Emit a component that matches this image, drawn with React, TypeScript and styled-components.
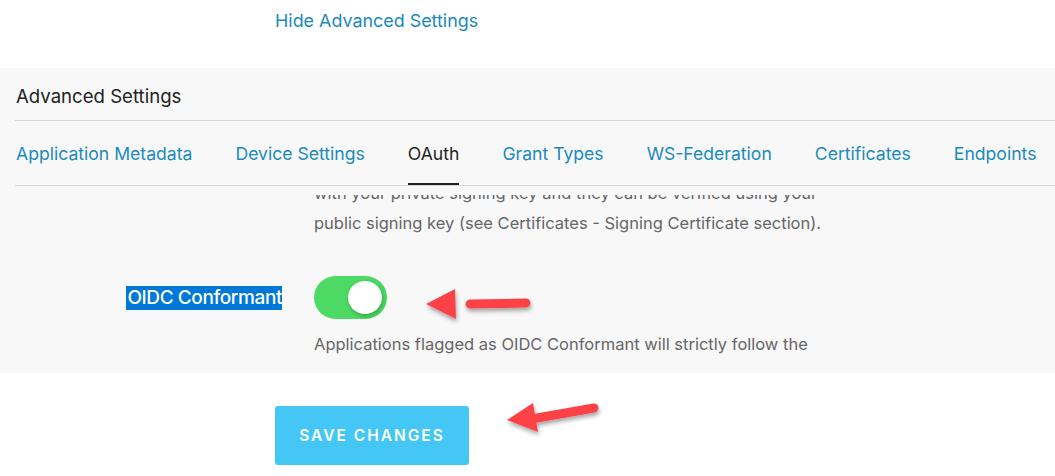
import React, { useLayoutEffect, useRef } from 'react';
import styled, { createGlobalStyle } from 'styled-components';

const GlobalStyle = createGlobalStyle`
  body {
    margin: 0;
    background: #fff;
    font-family: Inter, "Noto Sans", sans-serif;
  }
`;

const Page = styled.div`
  width: 1055px;
  height: 476px;
  overflow: hidden;
`;

const TopBar = styled.div`
  height: 68px;
  padding: 10px 0 0 275px;
  box-sizing: border-box;
`;

const Link = styled.a`
  color: #1a8abd;
  font-size: 17.9px;
  line-height: 22px;
  text-decoration: none;
`;

const Panel = styled.section`
  background: #f8f8f8;
  padding-left: 15px;
`;

const PanelTitle = styled.h3`
  margin: 0;
  padding: 18px 0 14px 1px;
  font-size: 18.6px;
  font-weight: 400;
  line-height: 20px;
  color: #222;
  border-bottom: 1px solid #d8d8d8;
`;

const Tabs = styled.nav`
  display: flex;
  gap: 43px;
  height: 64px;
  padding-left: 1px;
  border-bottom: 1px solid #d8d8d8;
  white-space: nowrap;
  overflow: hidden;
`;

const Tab = styled.a<{ $active?: boolean }>`
  display: flex;
  align-items: center;
  font-size: 17.6px;
  color: ${(p) => (p.$active ? '#222' : '#1a8abd')};
  border-bottom: 2px solid ${(p) => (p.$active ? '#222' : 'transparent')};
  padding-top: 2px;
  text-decoration: none;
`;

const Scroller = styled.div`
  margin-top: 9px;
  height: 178px;
  overflow: hidden;
`;

const ScrollBody = styled.div`
  padding-bottom: 60px;
`;

const Field = styled.div<{ $gap?: number }>`
  position: relative;
  display: grid;
  grid-template-columns: 267px 540px;
  column-gap: 32px;
  margin-top: ${(p) => p.$gap ?? 0}px;
`;

const Label = styled.div`
  display: flex;
  justify-content: flex-end;
  align-items: center;
  height: 43px;
`;

const Selected = styled.span`
  background: #0078d7;
  color: #fff;
  font-size: 19px;
  font-weight: 500;
  letter-spacing: -0.4px;
  line-height: 24px;
  padding: 0 0 0 1px;
`;

const Help = styled.p<{ $top?: number }>`
  grid-column: 2;
  margin: ${(p) => p.$top ?? 0}px 0 0;
  font-size: 16.5px;
  line-height: 30px;
  color: #666;
  white-space: nowrap;
`;

const Toggle = styled.div<{ $on?: boolean }>`
  width: 73px;
  height: 43px;
  border-radius: 22px;
  background: ${(p) => (p.$on ? '#4cd964' : '#ccc')};
  display: flex;
  align-items: center;
  justify-content: ${(p) => (p.$on ? 'flex-end' : 'flex-start')};
  padding: 0 5px;
  box-sizing: border-box;
`;

const Knob = styled.div`
  width: 34px;
  height: 33px;
  border-radius: 50%;
  background: #fff;
  box-shadow: 1px 2px 4px rgba(0, 0, 0, 0.25);
`;

const Arrow = styled.svg`
  position: absolute;
  overflow: visible;
`;

const Footer = styled.div`
  position: relative;
  padding: 33px 0 0 275px;
`;

const SaveButton = styled.button`
  width: 194px;
  height: 59px;
  border: none;
  border-radius: 3px;
  background: #44c7f4;
  color: #fff;
  font-family: inherit;
  font-size: 15.5px;
  font-weight: 600;
  letter-spacing: 2px;
  cursor: pointer;
`;

const tabs = [
  'Application Metadata',
  'Device Settings',
  'OAuth',
  'Grant Types',
  'WS-Federation',
  'Certificates',
  'Endpoints',
];

const RedArrow = ({ d, head, style }: { d: string; head: string; style: React.CSSProperties }) => (
  <Arrow style={style} width="10" height="10">
    <defs>
      <filter id="arrowShadow" x="-20%" y="-40%" width="140%" height="200%">
        <feDropShadow dx="1" dy="3" stdDeviation="2" floodColor="#000" floodOpacity="0.35" />
      </filter>
    </defs>
    <g filter="url(#arrowShadow)">
      <path d={d} stroke="#fd4347" strokeWidth="9" strokeLinecap="round" fill="none" />
      <polygon points={head} fill="#fd4347" />
    </g>
  </Arrow>
);

export default function App() {
  const scrollRef = useRef<HTMLDivElement>(null);

  useLayoutEffect(() => {
    if (scrollRef.current) scrollRef.current.scrollTop = 47;
  }, []);

  return (
    <Page>
      <GlobalStyle />
      <TopBar>
        <Link href="#">Hide Advanced Settings</Link>
      </TopBar>
      <Panel>
        <PanelTitle>Advanced Settings</PanelTitle>
        <Tabs>
          {tabs.map((t) => (
            <Tab key={t} href="#" $active={t === 'OAuth'}>
              {t}
            </Tab>
          ))}
        </Tabs>
        <Scroller ref={scrollRef}>
          <ScrollBody>
            <Field>
              <Help>
                RS256 will sign the tokens
                <br />
                with your private signing key and they can be verified using your
                <br />
                public signing key (see Certificates - Signing Certificate section).
              </Help>
            </Field>
            <Field $gap={38}>
              <Label>
                <Selected>OIDC Conformant</Selected>
              </Label>
              <div>
                <Toggle $on>
                  <Knob />
                </Toggle>
              </div>
              <RedArrow
                style={{ left: 411, top: 0 }}
                d="M 44 28 L 100 27"
                head="0,28 29,13 30,43"
              />
              <Help $top={10}>
                Applications flagged as OIDC Conformant will strictly follow the
              </Help>
            </Field>
          </ScrollBody>
        </Scroller>
      </Panel>
      <Footer>
        <SaveButton>SAVE CHANGES</SaveButton>
        <RedArrow
          style={{ left: 507, top: 30 }}
          d="M 30 15 L 87 5"
          head="0,17 26,0 31,29"
        />
      </Footer>
    </Page>
  );
}
